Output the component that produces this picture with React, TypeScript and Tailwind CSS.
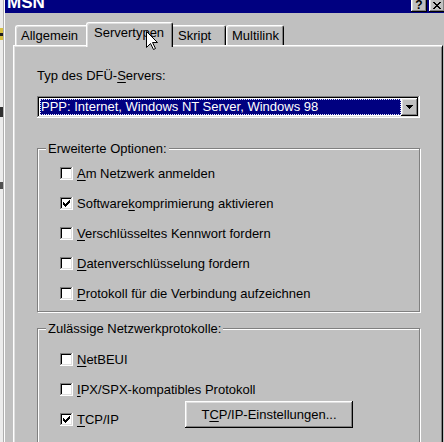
import React from 'react';

const raised =
  'shadow-[inset_-1px_-1px_#000,inset_1px_1px_#fff,inset_-2px_-2px_#808080,inset_2px_2px_#dfdfdf]';
const sunken =
  'shadow-[inset_-1px_-1px_#fff,inset_1px_1px_#808080,inset_-2px_-2px_#dfdfdf,inset_2px_2px_#000]';

// underlined access key
const K: React.FC<{ children: React.ReactNode }> = ({ children }) => (
  <span className="underline underline-offset-2 decoration-1">{children}</span>
);

const Check = () => (
  <svg width="7" height="7" viewBox="0 0 7 7" shapeRendering="crispEdges">
    <path
      d="M0 2h1v3H0zM1 3h1v3H1zM2 4h1v3H2zM3 3h1v3H3zM4 2h1v3H4zM5 1h1v3H5zM6 0h1v3H6z"
      fill="#000"
    />
  </svg>
);

const CheckBox: React.FC<{ checked?: boolean; children: React.ReactNode }> = ({ checked, children }) => (
  <div className="flex items-center h-[30px]">
    <span className={`w-[13px] h-[13px] shrink-0 bg-white flex items-center justify-center ${sunken}`}>
      {checked && <Check />}
    </span>
    <span className="ml-[4px] whitespace-nowrap">{children}</span>
  </div>
);

const Group: React.FC<{ title: string; className?: string; children: React.ReactNode }> = ({
  title,
  className = '',
  children,
}) => (
  <div className={`border border-[#808080] shadow-[inset_1px_1px_#fff,1px_1px_#fff] ${className}`}>
    <div className="w-fit -mt-[8px] ml-[8px] px-[2px] bg-[#c0c0c0] whitespace-nowrap">{title}</div>
    {children}
  </div>
);

const App: React.FC = () => {
  return (
    <div className="relative w-[444px] h-[442px] overflow-hidden flex bg-[#c0c0c0] text-black text-[13px] leading-[15px] font-['Liberation_Sans',Arial,sans-serif]">
      {/* strip of the window behind */}
      <div className="w-[3px] shrink-0 flex flex-col bg-[#ececec]">
        <div className="h-[28px]" />
        <div className="h-[5px] bg-[#d8c040]" />
        <div className="h-[3px] bg-[#202020]" />
        <div className="h-[4px] bg-[#d8c040]" />
        <div className="h-[67px]" />
        <div className="h-[10px] bg-[#303030]" />
        <div className="h-[65px]" />
        <div className="h-[7px] bg-[#505050]" />
      </div>

      {/* dialog */}
      <div className="flex-1 border-l border-l-[#b0b0b0]">
        <div className="h-full border-l border-l-white flex flex-col">
          {/* title bar */}
          <div className="h-[13px] shrink-0 bg-[#000080] flex items-end overflow-hidden pl-[2px]">
            <span className="text-white font-bold text-[17px] leading-[17px] mb-[2px]">MSN</span>
            <div className="ml-auto mr-[-1px] mb-[1px] flex items-end gap-[2px]">
              <div className={`w-[16px] h-[14px] bg-[#c0c0c0] ${raised} flex items-center justify-center font-bold text-[12px] leading-[12px]`}>
                ?
              </div>
              <div className={`w-[16px] h-[14px] bg-[#c0c0c0] ${raised} flex items-center justify-center`}>
                <svg width="8" height="7" viewBox="0 0 8 7" shapeRendering="crispEdges">
                  <path
                    d="M0 0h2v1H0zM6 0h2v1H6zM1 1h2v1H1zM5 1h2v1H5zM2 2h4v1H2zM3 3h2v1H3zM2 4h4v1H2zM1 5h2v1H1zM5 5h2v1H5zM0 6h2v1H0zM6 6h2v1H6z"
                    fill="#000"
                  />
                </svg>
              </div>
            </div>
          </div>

          {/* body */}
          <div className="flex-1 flex flex-col pt-[9px] pl-[8px] pr-[1px]">
            {/* tabs */}
            <div className="h-[23px] shrink-0 flex items-end pl-[2px]">
              <div className="w-[71px] h-[20px] border-t border-l border-t-white border-l-white rounded-tl-[3px] pt-[2px] pl-[5px] shadow-[inset_1px_1px_#dfdfdf]">
                Allgemein
              </div>
              <div className="relative z-10 w-[87px] h-[25px] mb-[-2px] bg-[#c0c0c0] border-t border-l border-r border-t-white border-l-white border-r-black rounded-t-[3px] pt-[2px] pl-[7px] shadow-[inset_1px_1px_#dfdfdf,inset_-1px_0_#808080]">
                Servertypen
              </div>
              <div className="w-[53px] h-[20px] border-t border-r border-t-white border-r-black rounded-tr-[3px] pt-[2px] pl-[5px] shadow-[inset_0_1px_#dfdfdf,inset_-1px_0_#808080]">
                Skript
              </div>
              <div className="w-[58px] h-[20px] border-t border-l border-r border-t-white border-l-white border-r-black rounded-t-[3px] pt-[2px] pl-[5px] shadow-[inset_1px_1px_#dfdfdf,inset_-1px_0_#808080]">
                Multilink
              </div>
            </div>

            {/* panel */}
            <div className="flex-1 border-t border-l border-r border-t-white border-l-white border-r-black shadow-[inset_1px_1px_#dfdfdf,inset_-1px_0_#808080] pt-[22px] pl-[23px] pr-[22px]">
              <div className="whitespace-nowrap">
                Typ des DFÜ-<K>S</K>ervers:
              </div>

              {/* dropdown */}
              <div className={`mt-[13px] h-[22px] flex p-[2px] bg-white ${sunken}`}>
                <div className="flex-1 ml-[1px] my-[1px] bg-[#000080] border border-dotted border-[#e0e0ff] text-white leading-[14px] whitespace-nowrap">
                  PPP: Internet, Windows NT Server, Windows 98
                </div>
                <div className={`w-[17px] bg-[#c0c0c0] ${raised} flex items-center justify-center`}>
                  <svg width="7" height="4" viewBox="0 0 7 4" shapeRendering="crispEdges">
                    <path d="M0 0h7v1H0zM1 1h5v1H1zM2 2h3v1H2zM3 3h1v1H3z" fill="#000" />
                  </svg>
                </div>
              </div>

              <Group title="Erweiterte Optionen:" className="mt-[30px] pb-[3px]">
                <div className="mt-[2px] pl-[22px]">
                  <CheckBox>
                    <K>A</K>m Netzwerk anmelden
                  </CheckBox>
                  <CheckBox checked>
                    Software<K>k</K>omprimierung aktivieren
                  </CheckBox>
                  <CheckBox>
                    <K>V</K>erschlüsseltes Kennwort fordern
                  </CheckBox>
                  <CheckBox>
                    <K>D</K>atenverschlüsselung fordern
                  </CheckBox>
                  <CheckBox>
                    <K>P</K>rotokoll für die Verbindung aufzeichnen
                  </CheckBox>
                </div>
              </Group>

              <Group title="Zulässige Netzwerkprotokolle:" className="mt-[16px] pb-[20px]">
                <div className="mt-[8px] pl-[22px]">
                  <CheckBox>
                    <K>N</K>etBEUI
                  </CheckBox>
                  <CheckBox>
                    <K>I</K>PX/SPX-kompatibles Protokoll
                  </CheckBox>
                  <div className="flex items-center">
                    <div className="w-[125px]">
                      <CheckBox checked>
                        <K>T</K>CP/IP
                      </CheckBox>
                    </div>
                    <div className={`w-[168px] h-[27px] mt-[-9px] bg-[#c0c0c0] ${raised} flex items-center justify-center whitespace-nowrap`}>
                      T<K>C</K>P/IP-Einstellungen...
                    </div>
                  </div>
                </div>
              </Group>
            </div>
          </div>
        </div>
      </div>

      {/* mouse pointer over the tab */}
      <svg className="absolute z-20 left-[146px] top-[31px]" width="12" height="19" viewBox="0 0 12 19">
        <path
          d="M0.5 0.5V16.5L4.5 12.5L7.5 18.5L9.5 17.5L6.5 11.5H11.5Z"
          fill="#fff"
          stroke="#000"
          strokeWidth="1"
        />
      </svg>
    </div>
  );
};

export default App;
